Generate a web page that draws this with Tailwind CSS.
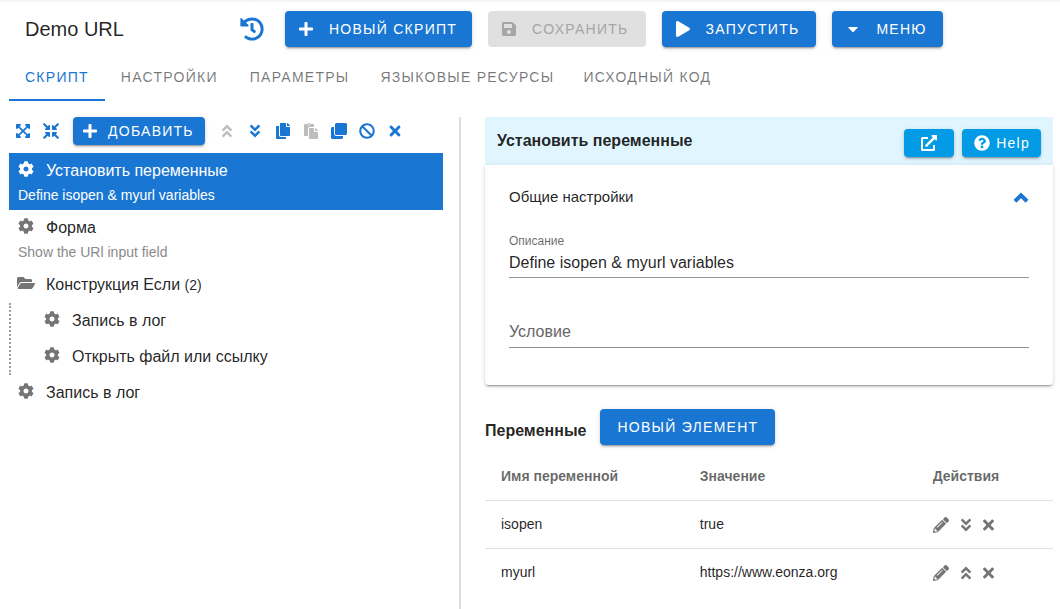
<!DOCTYPE html>
<html lang="ru">
<head>
<meta charset="utf-8">
<meta name="viewport" content="width=device-width, initial-scale=1">
<title>Demo URL</title>
<script src="https://cdn.jsdelivr.net/npm/@tailwindcss/browser@4"></script>
</head>
<body class="flex min-h-screen flex-col bg-white font-['Liberation_Sans',Arial,sans-serif] text-base text-black/87">

<svg class="hidden" aria-hidden="true">
  <symbol id="plus" viewBox="0 0 448 512"><path d="M416 208H272V64c0-17.67-14.33-32-32-32h-32c-17.67 0-32 14.33-32 32v144H32c-17.67 0-32 14.33-32 32v32c0 17.67 14.33 32 32 32h144v144c0 17.67 14.33 32 32 32h32c17.67 0 32-14.33 32-32V304h144c17.67 0 32-14.33 32-32v-32c0-17.67-14.33-32-32-32z"/></symbol>
  <symbol id="save" viewBox="0 0 448 512"><path d="M433.941 129.941l-83.882-83.882A48 48 0 0 0 316.118 32H48C21.49 32 0 53.49 0 80v352c0 26.51 21.49 48 48 48h352c26.51 0 48-21.49 48-48V163.882a48 48 0 0 0-14.059-33.941zM224 416c-35.346 0-64-28.654-64-64 0-35.346 28.654-64 64-64s64 28.654 64 64c0 35.346-28.654 64-64 64zm96-304.52V212c0 6.627-5.373 12-12 12H76c-6.627 0-12-5.373-12-12V108c0-6.627 5.373-12 12-12h228.52c3.183 0 6.235 1.264 8.485 3.515l3.48 3.48A11.996 11.996 0 0 1 320 111.48z"/></symbol>
  <symbol id="play" viewBox="0 0 448 512"><path d="M424.4 214.7L72.4 6.6C43.8-10.3 0 6.1 0 47.9V464c0 37.5 40.7 60.1 72.4 41.3l352-208c31.4-18.5 31.5-64.1 0-82.6z"/></symbol>
  <symbol id="caret" viewBox="0 0 320 512"><path d="M31.3 192h257.3c17.8 0 26.7 21.5 14.1 34.1L174.1 354.8c-7.8 7.8-20.5 7.8-28.3 0L17.2 226.1C4.6 213.5 13.4 192 31.3 192z"/></symbol>
  <symbol id="history" viewBox="0 0 512 512"><path d="M504 255.531c.253 136.64-111.18 248.372-247.82 248.468-59.015.042-113.223-20.53-155.822-54.911-11.077-8.94-11.905-25.541-1.839-35.607l11.267-11.267c8.609-8.609 22.353-9.551 31.891-1.984C173.062 425.135 212.781 440 256 440c101.705 0 184-82.311 184-184 0-101.705-82.311-184-184-184-48.814 0-93.149 18.969-126.068 49.932l50.754 50.754c10.08 10.08 2.941 27.314-11.313 27.314H24c-8.837 0-16-7.163-16-16V38.627c0-14.254 17.234-21.393 27.314-11.314l49.372 49.372C129.209 34.136 189.552 8 256 8c136.81 0 247.747 110.78 248 247.531zm-180.912 78.784l9.823-12.63c8.138-10.463 6.253-25.542-4.21-33.679L288 256.349V152c0-13.255-10.745-24-24-24h-16c-13.255 0-24 10.745-24 24v135.651l65.409 50.874c10.463 8.137 25.541 6.253 33.679-4.21z"/></symbol>
  <symbol id="cog" viewBox="0 0 512 512"><path d="M487.4 315.7l-42.6-24.6c4.3-23.2 4.3-47 0-70.2l42.6-24.6c4.9-2.8 7.1-8.6 5.5-14-11.1-35.6-30-67.8-54.7-94.6-3.8-4.1-10-5.1-14.8-2.3L380.8 110c-17.9-15.4-38.5-27.3-60.8-35.1V25.8c0-5.6-3.9-10.5-9.4-11.7-36.7-8.2-74.3-7.8-109.2 0-5.5 1.2-9.4 6.1-9.4 11.7V75c-22.2 7.9-42.8 19.8-60.8 35.1L88.7 85.5c-4.9-2.8-11-1.9-14.8 2.3-24.7 26.7-43.6 58.9-54.7 94.6-1.7 5.4.6 11.2 5.5 14L67.3 221c-4.3 23.2-4.3 47 0 70.2l-42.6 24.6c-4.9 2.8-7.1 8.6-5.5 14 11.1 35.6 30 67.8 54.7 94.6 3.8 4.1 10 5.1 14.8 2.3l42.6-24.6c17.9 15.4 38.5 27.3 60.8 35.1v49.2c0 5.6 3.9 10.5 9.4 11.7 36.7 8.2 74.3 7.8 109.2 0 5.5-1.2 9.4-6.1 9.4-11.7v-49.2c22.2-7.9 42.8-19.8 60.8-35.1l42.6 24.6c4.9 2.8 11 1.9 14.8-2.3 24.7-26.7 43.6-58.9 54.7-94.6 1.5-5.5-.7-11.3-5.6-14.1zM256 336c-44.1 0-80-35.9-80-80s35.9-80 80-80 80 35.9 80 80-35.9 80-80 80z"/></symbol>
  <symbol id="folder" viewBox="0 0 576 512"><path d="M572.694 292.093L500.27 416.248A63.997 63.997 0 0 1 444.989 448H45.025c-18.523 0-30.064-20.093-20.731-36.093l72.424-124.155A64 64 0 0 1 152 256h399.964c18.523 0 30.064 20.093 20.73 36.093zM152 224h328v-48c0-26.51-21.49-48-48-48H272l-64-64H48C21.49 64 0 85.49 0 112v278.046l69.077-118.418C86.214 242.25 117.989 224 152 224z"/></symbol>
  <symbol id="times" viewBox="0 0 352 512"><path d="M242.72 256l100.07-100.07c12.28-12.28 12.28-32.19 0-44.48l-22.24-22.24c-12.28-12.28-32.19-12.28-44.48 0L176 189.28 75.93 89.21c-12.28-12.28-32.19-12.28-44.48 0L9.21 111.45c-12.28 12.28-12.28 32.19 0 44.48L109.28 256 9.21 356.07c-12.28 12.28-12.28 32.19 0 44.48l22.24 22.24c12.28 12.28 32.2 12.28 44.48 0L176 322.72l100.07 100.07c12.28 12.28 32.2 12.28 44.48 0l22.24-22.24c12.28-12.28 12.28-32.19 0-44.48L242.72 256z"/></symbol>
  <symbol id="ban" viewBox="0 0 512 512"><path d="M256 8C119.034 8 8 119.033 8 256s111.034 248 248 248 248-111.034 248-248S392.967 8 256 8zm130.108 117.892c65.448 65.448 70 165.481 20.677 235.637L150.47 105.216c70.204-49.356 170.226-44.735 235.638 20.676zM125.892 386.108c-65.448-65.448-70-165.481-20.677-235.637L361.53 406.784c-70.203 49.356-170.226 44.736-235.638-20.676z"/></symbol>
  <symbol id="clone" viewBox="0 0 512 512"><path d="M464 0c26.51 0 48 21.49 48 48v288c0 26.51-21.49 48-48 48H176c-26.51 0-48-21.49-48-48V48c0-26.51 21.49-48 48-48h288M176 416c-44.112 0-80-35.888-80-80V128H48c-26.51 0-48 21.49-48 48v288c0 26.51 21.49 48 48 48h288c26.51 0 48-21.49 48-48v-48H176z"/></symbol>
  <symbol id="copy" viewBox="0 0 448 512"><path d="M320 448v40c0 13.255-10.745 24-24 24H24c-13.255 0-24-10.745-24-24V120c0-13.255 10.745-24 24-24h72v296c0 30.879 25.121 56 56 56h168zm0-344V0H152c-13.255 0-24 10.745-24 24v368c0 13.255 10.745 24 24 24h272c13.255 0 24-10.745 24-24V128H344c-13.2 0-24-10.8-24-24zm120.971-31.029L375.029 7.029A24 24 0 0 0 358.059 0H352v96h96v-6.059a24 24 0 0 0-7.029-16.97z"/></symbol>
  <symbol id="paste" viewBox="0 0 448 512"><path d="M128 184c0-30.879 25.122-56 56-56h136V56c0-13.255-10.745-24-24-24h-80.61C204.306 12.89 183.637 0 160 0s-44.306 12.89-55.39 32H24C10.745 32 0 42.745 0 56v336c0 13.255 10.745 24 24 24h104V184zm32-144c13.255 0 24 10.745 24 24s-10.745 24-24 24-24-10.745-24-24 10.745-24 24-24zm184 248h104v200c0 13.255-10.745 24-24 24H184c-13.255 0-24-10.745-24-24V184c0-13.255 10.745-24 24-24h136v104c0 13.2 10.8 24 24 24zm104-38.059V256h-96v-96h6.059a24 24 0 0 1 16.97 7.029l65.941 65.941a24.002 24.002 0 0 1 7.03 16.971z"/></symbol>
  <symbol id="up2" viewBox="0 0 320 512"><path d="M177 255.7l136 136c9.4 9.4 9.4 24.6 0 33.9l-22.6 22.6c-9.4 9.4-24.6 9.4-33.9 0L160 351.9l-96.4 96.4c-9.4 9.4-24.6 9.4-33.9 0L7 425.7c-9.4-9.4-9.4-24.6 0-33.9l136-136c9.4-9.5 24.6-9.5 34-.1zm-34-192L7 199.7c-9.4 9.4-9.4 24.6 0 33.9l22.6 22.6c9.4 9.4 24.6 9.4 33.9 0l96.4-96.4 96.4 96.4c9.4 9.4 24.6 9.4 33.9 0l22.6-22.6c9.4-9.4 9.4-24.6 0-33.9l-136-136c-9.2-9.4-24.4-9.4-33.8 0z"/></symbol>
  <symbol id="down2" viewBox="0 0 320 512"><path transform="rotate(180 160 256)" d="M177 255.7l136 136c9.4 9.4 9.4 24.6 0 33.9l-22.6 22.6c-9.4 9.4-24.6 9.4-33.9 0L160 351.9l-96.4 96.4c-9.4 9.4-24.6 9.4-33.9 0L7 425.7c-9.4-9.4-9.4-24.6 0-33.9l136-136c9.4-9.5 24.6-9.5 34-.1zm-34-192L7 199.7c-9.4 9.4-9.4 24.6 0 33.9l22.6 22.6c9.4 9.4 24.6 9.4 33.9 0l96.4-96.4 96.4 96.4c9.4 9.4 24.6 9.4 33.9 0l22.6-22.6c9.4-9.4 9.4-24.6 0-33.9l-136-136c-9.2-9.4-24.4-9.4-33.8 0z"/></symbol>
  <symbol id="expand" viewBox="0 0 448 512"><path d="M448 344v112a23.94 23.94 0 0 1-24 24H312c-21.39 0-32.09-25.9-17-41l36.2-36.2L224 295.6 116.77 402.9 153 439c15.09 15.1 4.39 41-17 41H24a23.94 23.94 0 0 1-24-24V344c0-21.4 25.89-32.1 41-17l36.19 36.2L184.46 256 77.18 148.7 41 185c-15.1 15.1-41 4.4-41-17V56a23.94 23.94 0 0 1 24-24h112c21.39 0 32.09 25.9 17 41l-36.2 36.2L224 216.4l107.23-107.3L295 73c-15.09-15.1-4.39-41 17-41h112a23.94 23.94 0 0 1 24 24v112c0 21.4-25.89 32.1-41 17l-36.19-36.2L263.54 256l107.28 107.3L407 327.1c15.1-15.2 41-4.5 41 16.9z"/></symbol>
  <symbol id="compress" viewBox="0 0 512 512"><path d="M200 288H88c-21.4 0-32.1 25.8-17 41l32.9 31-99.2 99.3c-6.2 6.2-6.2 16.4 0 22.6l25.4 25.4c6.2 6.2 16.4 6.2 22.6 0L152 408l31.1 33c15.1 15.1 40.9 4.4 40.9-17V312c0-13.3-10.7-24-24-24zm112-64h112c21.4 0 32.1-25.9 17-41l-33-31 99.3-99.3c6.2-6.2 6.2-16.4 0-22.6L481.9 4.7c-6.2-6.2-16.4-6.2-22.6 0L360 104l-31.1-33C313.8 55.9 288 66.6 288 88v112c0 13.3 10.7 24 24 24zm96 136l33-31.1c15.1-15.1 4.4-40.9-17-40.9H312c-13.3 0-24 10.7-24 24v112c0 21.4 25.9 32.1 41 17l31-32.9 99.3 99.3c6.2 6.2 16.4 6.2 22.6 0l25.4-25.4c6.2-6.2 6.2-16.4 0-22.6L408 360zM183 71.1L152 104 52.7 4.7c-6.2-6.2-16.4-6.2-22.6 0L4.7 30.1c-6.2 6.2-6.2 16.4 0 22.6L104 152l-33 31.1C55.9 198.2 66.6 224 88 224h112c13.3 0 24-10.7 24-24V88c0-21.3-25.9-32-41-16.9z"/></symbol>
  <symbol id="pencil" viewBox="0 0 512 512"><path d="M497.9 142.1l-46.1 46.1c-4.7 4.7-12.3 4.7-17 0l-111-111c-4.7-4.7-4.7-12.3 0-17l46.1-46.1c18.7-18.7 49.1-18.7 67.9 0l60.1 60.1c18.8 18.7 18.8 49.1 0 67.9zM284.2 99.8L21.6 362.4.4 483.9c-2.9 16.4 11.4 30.6 27.8 27.8l121.5-21.3 262.6-262.6c4.7-4.7 4.7-12.3 0-17l-111-111c-4.8-4.7-12.4-4.7-17.1 0zM124.1 339.9c-5.5-5.5-5.5-14.3 0-19.8l154-154c5.5-5.5 14.3-5.5 19.8 0s5.5 14.3 0 19.8l-154 154c-5.5 5.5-14.3 5.5-19.8 0zM88 424h48v36.3l-64.5 11.3-31.1-31.1L51.7 376H88v48z"/></symbol>
  <symbol id="question" viewBox="0 0 512 512"><path d="M504 256c0 136.997-111.043 248-248 248S8 392.997 8 256C8 119.083 119.043 8 256 8s248 111.083 248 248zM262.655 90c-54.497 0-89.255 22.957-116.549 63.758-3.536 5.286-2.353 12.415 2.715 16.258l34.699 26.31c5.205 3.947 12.621 3.008 16.665-2.122 17.864-22.658 30.113-35.797 57.303-35.797 20.429 0 45.698 13.148 45.698 32.958 0 14.976-12.363 22.667-32.534 33.976C247.128 238.528 216 254.941 216 296v4c0 6.627 5.373 12 12 12h56c6.627 0 12-5.373 12-12v-1.333c0-28.462 83.186-29.647 83.186-106.667 0-58.002-60.165-102-116.531-102zM256 338c-25.365 0-46 20.635-46 46 0 25.364 20.635 46 46 46s46-20.636 46-46c0-25.365-20.635-46-46-46z"/></symbol>
  <symbol id="external" viewBox="0 0 512 512"><path d="M432,320H400a16,16,0,0,0-16,16V448H64V128H208a16,16,0,0,0,16-16V80a16,16,0,0,0-16-16H48A48,48,0,0,0,0,112V464a48,48,0,0,0,48,48H400a48,48,0,0,0,48-48V336A16,16,0,0,0,432,320ZM488,0h-128c-21.37,0-32.05,25.91-17,41l35.73,35.73L135,320.37a24,24,0,0,0,0,34L157.67,377a24,24,0,0,0,34,0L435.28,133.32,471,169c15,15,41,4.5,41-17V24A24,24,0,0,0,488,0Z"/></symbol>
  <symbol id="chevron" viewBox="0 0 448 512"><path d="M52 348L224 178L396 348" fill="none" stroke="currentColor" stroke-width="112"/></symbol>
</svg>

<div class="h-[3px] bg-linear-to-b from-[#f2f2f2] to-white"></div>

<header class="flex items-center gap-4 pt-2 pr-4 pl-[25px]">
  <h1 class="w-[199px] text-xl leading-9">Demo URL</h1>
  <button type="button" aria-label="История" class="mr-[5px] text-[#1976d2]"><svg class="size-6 fill-current"><use href="#history"/></svg></button>
  <button type="button" class="flex h-9 items-center gap-4 rounded bg-[#1976d2] pr-[15px] pl-3.5 text-sm tracking-[0.09em] whitespace-nowrap text-white shadow-[0_3px_1px_-2px_rgba(0,0,0,.2),0_2px_2px_0_rgba(0,0,0,.14),0_1px_5px_0_rgba(0,0,0,.12)]"><svg class="h-4 w-3.5 fill-current"><use href="#plus"/></svg>НОВЫЙ СКРИПТ</button>
  <button type="button" disabled class="flex h-9 items-center gap-4 rounded bg-[#e0e0e0] pr-[17px] pl-3.5 text-sm tracking-[0.09em] whitespace-nowrap text-[#a6a6a6]"><svg class="h-4 w-3.5 fill-current"><use href="#save"/></svg>СОХРАНИТЬ</button>
  <button type="button" class="flex h-9 items-center gap-4 rounded bg-[#1976d2] pr-[17px] pl-3.5 text-sm tracking-[0.09em] whitespace-nowrap text-white shadow-[0_3px_1px_-2px_rgba(0,0,0,.2),0_2px_2px_0_rgba(0,0,0,.14),0_1px_5px_0_rgba(0,0,0,.12)]"><svg class="h-4 w-3.5 fill-current"><use href="#play"/></svg>ЗАПУСТИТЬ</button>
  <button type="button" class="flex h-9 items-center gap-4 rounded bg-[#1976d2] pr-4 pl-3.5 text-sm tracking-[0.09em] whitespace-nowrap text-white shadow-[0_3px_1px_-2px_rgba(0,0,0,.2),0_2px_2px_0_rgba(0,0,0,.14),0_1px_5px_0_rgba(0,0,0,.12)]"><svg class="h-4 w-3.5 fill-current"><use href="#caret"/></svg>МЕНЮ</button>
</header>

<nav class="mt-1.5 ml-[9px] flex h-12 text-sm tracking-[0.09em] whitespace-nowrap text-black/54">
  <a href="#" aria-current="page" class="flex items-center border-b-2 border-[#1976d2] px-4 pt-0.5 text-[#1976d2]">СКРИПТ</a>
  <a href="#" class="flex items-center px-4">НАСТРОЙКИ</a>
  <a href="#" class="flex items-center px-4">ПАРАМЕТРЫ</a>
  <a href="#" class="flex items-center pr-3.5 pl-[15px]">ЯЗЫКОВЫЕ РЕСУРСЫ</a>
  <a href="#" class="flex items-center pr-4 pl-[15px]">ИСХОДНЫЙ КОД</a>
</nav>

<main class="mt-4 mr-[7px] ml-[9px] grid grow grid-cols-[452fr_592fr]">
  <section class="border-r-2 border-[#dcdcdc] pr-4">
    <div class="flex h-7 items-center text-[#1976d2]">
      <button type="button" aria-label="Развернуть" class="flex size-7 items-center justify-center"><svg class="size-4 fill-current"><use href="#expand"/></svg></button>
      <button type="button" aria-label="Свернуть" class="flex size-7 items-center justify-center"><svg class="size-4 fill-current"><use href="#compress"/></svg></button>
      <button type="button" class="mx-2 flex h-7 items-center gap-[11px] rounded bg-[#1976d2] pr-[11px] pl-2.5 text-sm tracking-[0.09em] whitespace-nowrap text-white shadow-[0_3px_1px_-2px_rgba(0,0,0,.2),0_2px_2px_0_rgba(0,0,0,.14),0_1px_5px_0_rgba(0,0,0,.12)]"><svg class="h-4 w-3.5 fill-current"><use href="#plus"/></svg>ДОБАВИТЬ</button>
      <button type="button" disabled aria-label="Вверх" class="flex size-7 items-center justify-center text-black/26"><svg class="size-4 fill-current"><use href="#up2"/></svg></button>
      <button type="button" aria-label="Вниз" class="flex size-7 items-center justify-center"><svg class="size-4 fill-current"><use href="#down2"/></svg></button>
      <button type="button" aria-label="Копировать" class="flex size-7 items-center justify-center"><svg class="size-4 fill-current"><use href="#copy"/></svg></button>
      <button type="button" disabled aria-label="Вставить" class="flex size-7 items-center justify-center text-black/26"><svg class="size-4 fill-current"><use href="#paste"/></svg></button>
      <button type="button" aria-label="Дублировать" class="flex size-7 items-center justify-center"><svg class="size-4 fill-current"><use href="#clone"/></svg></button>
      <button type="button" aria-label="Отключить" class="flex size-7 items-center justify-center"><svg class="size-4 fill-current"><use href="#ban"/></svg></button>
      <button type="button" aria-label="Удалить" class="flex size-7 items-center justify-center"><svg class="size-4 fill-current"><use href="#times"/></svg></button>
    </div>
    <ul class="mt-2">
      <li class="bg-[#1976d2] pt-1.5 pb-[5px] text-white">
        <div class="flex gap-[11px] pl-2 leading-6"><svg class="mt-0.5 h-4 w-[18px] fill-current"><use href="#cog"/></svg>Установить переменные</div>
        <div class="mt-0.5 pl-[9px] text-sm">Define isopen &amp; myurl variables</div>
      </li>
      <li class="pt-1.5 pb-[5px]">
        <div class="flex gap-[11px] pl-2 leading-6"><svg class="mt-0.5 h-4 w-[18px] fill-[#757575]"><use href="#cog"/></svg>Форма</div>
        <div class="mt-0.5 pl-[9px] text-sm text-[#8a8a8a]">Show the URl input field</div>
      </li>
      <li>
        <div class="flex gap-[11px] py-1.5 pl-2 leading-6"><svg class="mt-0.5 h-4 w-[18px] fill-[#757575]"><use href="#folder"/></svg><span>Конструкция Если <span class="text-sm">(2)</span></span></div>
        <ul class="border-l-2 border-dotted border-[#9e9e9e] pl-6">
          <li class="flex gap-[11px] py-1.5 pl-2 leading-6"><svg class="mt-0.5 h-4 w-[18px] fill-[#757575]"><use href="#cog"/></svg>Запись в лог</li>
          <li class="flex gap-[11px] py-1.5 pl-2 leading-6"><svg class="mt-0.5 h-4 w-[18px] fill-[#757575]"><use href="#cog"/></svg>Открыть файл или ссылку</li>
        </ul>
      </li>
      <li class="flex gap-[11px] py-1.5 pl-2 leading-6"><svg class="mt-0.5 h-4 w-[18px] fill-[#757575]"><use href="#cog"/></svg>Запись в лог</li>
    </ul>
  </section>

  <section class="pl-6">
    <div class="flex items-start gap-2 bg-[#e1f5fe] px-3 pt-3 pb-2">
      <h2 class="grow font-bold">Установить переменные</h2>
      <button type="button" aria-label="Открыть" class="flex h-7 w-[50px] items-center justify-center rounded bg-[#039be5] text-white shadow-[0_3px_1px_-2px_rgba(0,0,0,.2),0_2px_2px_0_rgba(0,0,0,.14),0_1px_5px_0_rgba(0,0,0,.12)]"><svg class="size-4 fill-current"><use href="#external"/></svg></button>
      <button type="button" class="flex h-7 items-center gap-1.5 rounded bg-[#039be5] pr-[11px] pl-3 text-sm tracking-[0.09em] text-white shadow-[0_3px_1px_-2px_rgba(0,0,0,.2),0_2px_2px_0_rgba(0,0,0,.14),0_1px_5px_0_rgba(0,0,0,.12)]"><svg class="size-4 fill-current"><use href="#question"/></svg>Help</button>
    </div>
    <div class="rounded-b bg-white px-6 pb-[37px] shadow-[0_3px_1px_-2px_rgba(0,0,0,.2),0_2px_2px_0_rgba(0,0,0,.14),0_1px_5px_0_rgba(0,0,0,.12)]">
      <button type="button" aria-expanded="true" class="flex h-16 w-full items-center justify-between pt-px text-[15px]">Общие настройки<svg class="h-[18px] w-4 text-[#1976d2]"><use href="#chevron"/></svg></button>
      <label for="desc" class="block pt-1 text-xs text-black/60">Описание</label>
      <input id="desc" type="text" value="Define isopen &amp; myurl variables" class="block h-[29px] w-full border-b border-[#949494] pt-0.5 pb-0.5 leading-6 outline-none">
      <div class="relative mt-[41px]">
        <label for="cond" class="absolute top-px left-0 leading-6 text-[#666]">Условие</label>
        <input id="cond" type="text" class="block h-[29px] w-full border-b border-[#949494] pt-0.5 pb-0.5 leading-6 outline-none">
      </div>
    </div>
    <div class="mt-6 flex gap-3.5">
      <h3 class="pt-2.5 font-bold">Переменные</h3>
      <button type="button" class="flex h-9 items-center rounded bg-[#1976d2] px-[17px] text-sm tracking-[0.09em] whitespace-nowrap text-white shadow-[0_3px_1px_-2px_rgba(0,0,0,.2),0_2px_2px_0_rgba(0,0,0,.14),0_1px_5px_0_rgba(0,0,0,.12)]">НОВЫЙ ЭЛЕМЕНТ</button>
    </div>
    <table class="mt-[7px] w-full table-fixed text-left text-sm">
      <thead class="text-black/60">
        <tr class="h-12 border-b border-[#e0e0e0]"><th class="w-[35%] px-4">Имя переменной</th><th class="w-[41%] px-4">Значение</th><th class="px-4">Действия</th></tr>
      </thead>
      <tbody>
        <tr class="h-12 border-b border-[#e0e0e0]">
          <td class="px-4">isopen</td><td class="px-4">true</td>
          <td class="px-4"><div class="flex gap-3 pt-0.5 text-[#757575]">
            <button type="button" aria-label="Изменить"><svg class="size-4 fill-current"><use href="#pencil"/></svg></button>
            <button type="button" aria-label="Вниз"><svg class="h-4 w-2.5 fill-current"><use href="#down2"/></svg></button>
            <button type="button" aria-label="Удалить"><svg class="h-4 w-[11px] fill-current"><use href="#times"/></svg></button>
          </div></td>
        </tr>
        <tr class="h-12">
          <td class="px-4">myurl</td><td class="px-4">https://www.eonza.org</td>
          <td class="px-4"><div class="flex gap-3 pt-0.5 text-[#757575]">
            <button type="button" aria-label="Изменить"><svg class="size-4 fill-current"><use href="#pencil"/></svg></button>
            <button type="button" aria-label="Вверх"><svg class="h-4 w-2.5 fill-current"><use href="#up2"/></svg></button>
            <button type="button" aria-label="Удалить"><svg class="h-4 w-[11px] fill-current"><use href="#times"/></svg></button>
          </div></td>
        </tr>
      </tbody>
    </table>
  </section>
</main>
</body>
</html>
